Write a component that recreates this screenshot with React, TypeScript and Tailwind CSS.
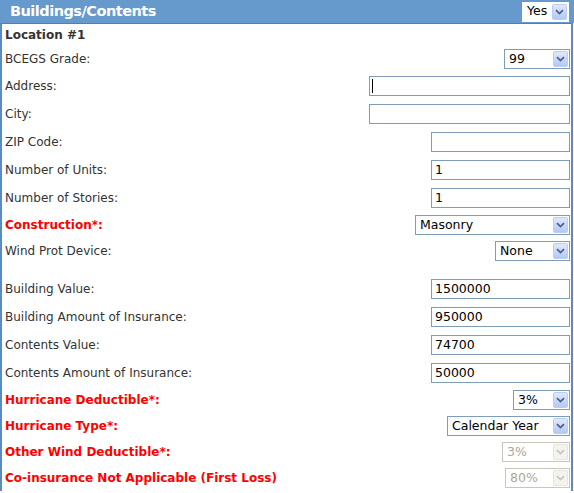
type SelProps = { value: string; w: string; disabled?: boolean; plain?: boolean };

function Chevron({ disabled }: { disabled?: boolean }) {
  return (
    <svg width="9" height="6" viewBox="0 0 9 6">
      <path d="M1 1.2 L4.5 4.6 L8 1.2" fill="none" stroke={disabled ? "#c9c7ba" : "#4d6185"} strokeWidth="1.8" />
    </svg>
  );
}

function Select({ value, w, disabled, plain }: SelProps) {
  const border = plain ? "border-white" : disabled ? "border-[#c9c7ba]" : "border-[#7f9db9]";
  return (
    <div className={`flex h-[20px] items-center border bg-white ${border} ${w}`}>
      <span className={`flex-1 pl-[4px] text-[12.5px] leading-none ${disabled ? "text-[#aca899]" : "text-black"}`}>{value}</span>
      <div
        className={`mr-px flex h-[16px] w-[15px] items-center justify-center rounded-[2px] border ${
          disabled
            ? "border-[#e6e4dc] bg-[#f4f3ee]"
            : "border-[#b9cdf6] bg-gradient-to-b from-[#dfe8fd] to-[#b4c8f5]"
        }`}
      >
        <Chevron disabled={disabled} />
      </div>
    </div>
  );
}

function Input({ value, w, caret }: { value?: string; w: string; caret?: boolean }) {
  return (
    <div className={`relative flex h-[20px] items-center border border-[#7f9db9] bg-white ${w}`}>
      <span className="pl-[3px] text-[12.5px] leading-none text-black">{value}</span>
      {caret && <span className="absolute left-[2px] top-[2px] h-[14px] w-px bg-black" />}
    </div>
  );
}

function Row({ label, h, red, children }: { label: string; h: string; red?: boolean; children?: React.ReactNode }) {
  return (
    <div className={`flex items-center justify-between ${h}`}>
      <span className={`text-[12px] ${red ? "font-bold text-[#ff0000]" : "text-[#333]"}`}>{label}</span>
      {children}
    </div>
  );
}

export default function App() {
  return (
    <div className="w-[574px] bg-white font-['DejaVu_Sans',Verdana,sans-serif]">
      {/* Header */}
      <div className="flex h-[23px] items-center justify-between bg-[#6699cc] pl-[10px] pr-[5px]">
        <span className="text-[14.5px] font-bold tracking-[-0.5px] text-white">Buildings/Contents</span>
        <Select value="Yes" w="w-[47px]" plain />
      </div>

      <div className="w-[573px] border-x-2 border-t border-x-[#5a8cc4] border-t-[#4d83b3] pl-[3px] pr-px">
        <div className="flex h-[22px] items-center">
          <span className="text-[12px] font-bold text-[#333]">Location #1</span>
        </div>

        <Row label="BCEGS Grade:" h="h-[26px]">
          <Select value="99" w="w-[66px]" />
        </Row>
        <Row label="Address:" h="h-[28px]">
          <Input w="w-[201px]" caret />
        </Row>
        <Row label="City:" h="h-[28px]">
          <Input w="w-[201px]" />
        </Row>
        <Row label="ZIP Code:" h="h-[28px]">
          <Input w="w-[139px]" />
        </Row>
        <Row label="Number of Units:" h="h-[28px]">
          <Input value="1" w="w-[139px]" />
        </Row>
        <Row label="Number of Stories:" h="h-[28px]">
          <Input value="1" w="w-[139px]" />
        </Row>
        <Row label="Construction*:" h="h-[26px]" red>
          <Select value="Masonry" w="w-[155px]" />
        </Row>
        <Row label="Wind Prot Device:" h="h-[26px]">
          <Select value="None" w="w-[75px]" />
        </Row>

        <div className="h-[11px]" />

        <Row label="Building Value:" h="h-[28px]">
          <Input value="1500000" w="w-[139px]" />
        </Row>
        <Row label="Building Amount of Insurance:" h="h-[28px]">
          <Input value="950000" w="w-[139px]" />
        </Row>
        <Row label="Contents Value:" h="h-[28px]">
          <Input value="74700" w="w-[139px]" />
        </Row>
        <Row label="Contents Amount of Insurance:" h="h-[28px]">
          <Input value="50000" w="w-[139px]" />
        </Row>
        <Row label="Hurricane Deductible*:" h="h-[26px]" red>
          <Select value="3%" w="w-[57px]" />
        </Row>
        <Row label="Hurricane Type*:" h="h-[26px]" red>
          <Select value="Calendar Year" w="w-[123px]" />
        </Row>
        <Row label="Other Wind Deductible*:" h="h-[26px]" red>
          <Select value="3%" w="w-[68px]" disabled />
        </Row>
        <Row label="Co-insurance Not Applicable (First Loss)" h="h-[26px]" red>
          <Select value="80%" w="w-[65px]" disabled />
        </Row>
      </div>
    </div>
  );
}
